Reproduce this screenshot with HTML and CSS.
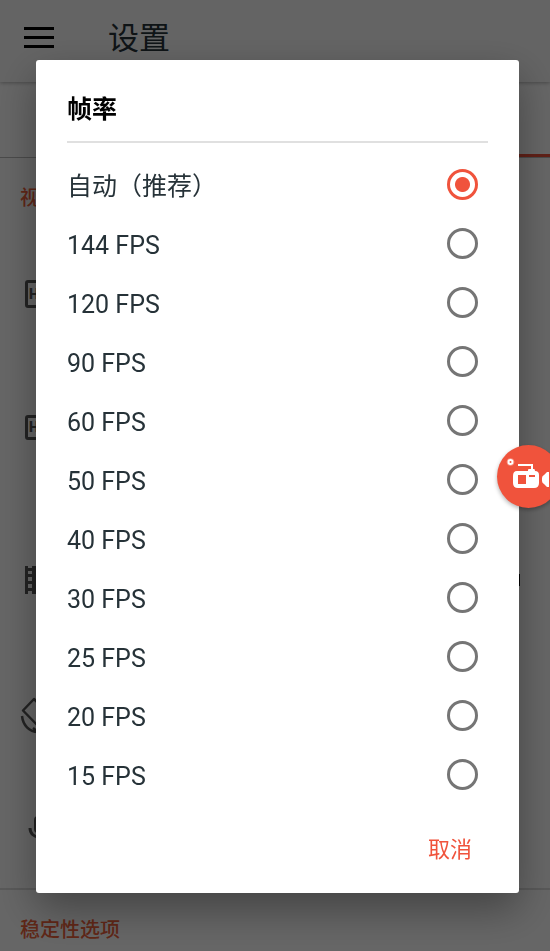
FILE: index.html
```html
<!DOCTYPE html>
<html lang="zh-CN">
<head>
<meta charset="utf-8">
<meta name="viewport" content="width=device-width, initial-scale=1">
<title>设置</title>
<link rel="stylesheet" href="styles.css">
</head>
<body>
<div class="page">
  <header class="app-bar">
    <button class="menu" type="button" aria-label="菜单"><span></span><span></span><span></span></button>
    <h1>设置</h1>
  </header>
  <nav class="tabs"><span class="tab"></span><span class="tab active"></span></nav>
  <main>
    <h2 class="section-title">视</h2>
    <div class="setting resolution"><span class="badge">H</span></div>
    <div class="setting quality"><span class="badge small">H</span></div>
    <div class="setting framerate">
      <svg class="icon" width="28" height="28" viewBox="0 0 28 28"><path fill="#000" fill-rule="evenodd" d="M0 0h3v2h4V0h14v2h4V0h3v28h-3v-3h-4v3H7v-3H3v3H0zM3 5v3h4V5zM3 11v4h4v-4zM3 18v4h4v-4zM21 5v3h4V5zM21 11v4h4v-4zM21 18v4h4v-4z"/></svg>
      <span class="value"></span>
    </div>
    <div class="setting orientation">
      <svg class="icon" width="38" height="38" viewBox="0 0 38 38" fill="none" stroke="#000" stroke-width="2.500"><path d="M14 3L3 14.500L22 34L34 22.500Z" stroke-linejoin="round"/><path d="M2 20C3 29 9 36 18 36M18 36l-5-4"/></svg>
    </div>
    <div class="setting audio">
      <svg class="icon" width="22" height="30" viewBox="0 0 22 30"><rect x="6" y="2" width="9" height="17" rx="4" fill="#000"/><path d="M2 14c0 12 18 12 18 0M11 23v6" fill="none" stroke="#000" stroke-width="3"/></svg>
    </div>
    <h2 class="section-title stability">稳定性选项</h2>
  </main>
</div>

<div class="scrim">
  <form class="dialog" role="dialog" aria-labelledby="dialog-title">
    <h2 id="dialog-title">帧率</h2>
    <div class="options">
      <label class="option"><span>自动（推荐）</span><input type="radio" name="fps" checked></label>
      <label class="option"><span>144 FPS</span><input type="radio" name="fps"></label>
      <label class="option"><span>120 FPS</span><input type="radio" name="fps"></label>
      <label class="option"><span>90 FPS</span><input type="radio" name="fps"></label>
      <label class="option"><span>60 FPS</span><input type="radio" name="fps"></label>
      <label class="option"><span>50 FPS</span><input type="radio" name="fps"></label>
      <label class="option"><span>40 FPS</span><input type="radio" name="fps"></label>
      <label class="option"><span>30 FPS</span><input type="radio" name="fps"></label>
      <label class="option"><span>25 FPS</span><input type="radio" name="fps"></label>
      <label class="option"><span>20 FPS</span><input type="radio" name="fps"></label>
      <label class="option"><span>15 FPS</span><input type="radio" name="fps"></label>
    </div>
    <div class="actions"><button class="cancel" type="button">取消</button></div>
  </form>
</div>

<button class="recorder" type="button" aria-label="录制">
  <svg width="63" height="63" viewBox="0 0 63 63">
    <circle cx="13.500" cy="17" r="2" fill="#f0533c" stroke="#fff" stroke-width="2"/>
    <circle cx="13.500" cy="17" r="3.500" fill="none" stroke="#fff" stroke-opacity="0.3"/>
    <path d="M21 20h14v6" fill="none" stroke="#fff" stroke-width="2"/>
    <path fill="#fff" fill-rule="evenodd" d="M20 26h11v-1q0-1 1-1h5q1 0 1 2q4 0 4 4v8q0 5-5 5H21q-5 0-5-5v-7q0-5 4-5zM21 30v9h8v-9zM32 30v2h6v-2z"/>
    <path fill="#fff" d="M45 33q0-2 2-3l3-3h2v15h-2l-3-3q-2-1-2-3z"/>
  </svg>
</button>
</body>
</html>
```

FILE: styles.css
```css
* {
  box-sizing: border-box;
}

body {
  margin: 0;
  background: #fff;
  color: #263238;
  font-family: Roboto, "Noto Sans CJK SC", sans-serif;
}

h1,
h2 {
  margin: 0;
}

button {
  padding: 0;
  border: 0;
  background: none;
  font: inherit;
}

.page {
  height: 100vh;
  overflow: hidden;
}

.app-bar {
  display: flex;
  align-items: center;
  gap: 54px;
  height: 82px;
  padding: 0 24px 8px;
  background: #fafafa;
  box-shadow: 0 1px 4px rgba(0, 0, 0, 0.3);
}

.app-bar h1 {
  padding-top: 4px;
  font-size: 31px;
  line-height: 40px;
  font-weight: 400;
}

.menu {
  display: flex;
  flex-direction: column;
  gap: 6px;
  width: 30px;
}

.menu span {
  height: 3px;
  background: #000;
}

.tabs {
  display: flex;
  height: 76px;
  border-bottom: 1px solid #bbb;
}

.tab {
  flex: 1;
}

.tab.active {
  border-bottom: 3px solid #f0533c;
}

.section-title {
  padding: 20px 20px 0;
  height: 69px;
  color: #f0623c;
  font-size: 20px;
  line-height: 40px;
  font-weight: 500;
}

.setting {
  display: flex;
  align-items: center;
  padding: 0 30px 0 25px;
}

.resolution {
  height: 134px;
}

.quality {
  height: 133px;
}

.framerate {
  height: 172px;
}

.orientation {
  height: 98px;
  padding-left: 20px;
}

.audio {
  height: 124px;
  padding-top: 6px;
  padding-left: 28px;
}

.icon,
.badge {
  opacity: 0.65;
}

.badge {
  width: 36px;
  height: 28px;
  padding-left: 1px;
  border: 3px solid #000;
  border-radius: 3px;
  color: #000;
  font-size: 14px;
  line-height: 22px;
  font-weight: 900;
}

.badge.small {
  height: 25px;
  line-height: 19px;
}

.value {
  width: 1px;
  height: 12px;
  margin-left: auto;
  background: #000;
}

.stability {
  border-top: 2px solid #ddd;
}

.scrim {
  position: fixed;
  inset: 0;
  display: flex;
  align-items: center;
  padding: 2px 31px 0 36px;
  background: rgba(0, 0, 0, 0.6);
}

.dialog {
  flex: 1;
  padding: 22px 31px 11px;
  border-radius: 3px;
  background: #fff;
  box-shadow: 0 16px 40px rgba(0, 0, 0, 0.35);
}

.dialog h2 {
  padding-bottom: 3px;
  border-bottom: 2px solid #e0e0e0;
  color: #000;
  font-size: 25px;
  line-height: 56px;
  font-weight: 700;
}

.options {
  padding: 12px 10px 0 0;
}

.option {
  display: flex;
  align-items: center;
  justify-content: space-between;
  height: 59px;
  font-size: 25px;
  line-height: 32px;
}

.option span {
  padding-top: 4px;
}

.option input {
  appearance: none;
  width: 31px;
  height: 31px;
  margin: 0;
  border: 3px solid #757575;
  border-radius: 50%;
}

.option input:checked {
  border-color: #f0533c;
  background: radial-gradient(circle, #f0533c 7px, transparent 8px);
}

.actions {
  display: flex;
  justify-content: flex-end;
  padding: 14px 16px 0 0;
}

.cancel {
  color: #f0533c;
  font-size: 22px;
  line-height: 64px;
}

.recorder {
  position: fixed;
  top: 445px;
  right: -10px;
  width: 63px;
  height: 63px;
  border-radius: 50%;
  background: #f0533c;
  box-shadow: 0 2px 4px rgba(0, 0, 0, 0.3);
}

.recorder svg {
  display: block;
}
```
